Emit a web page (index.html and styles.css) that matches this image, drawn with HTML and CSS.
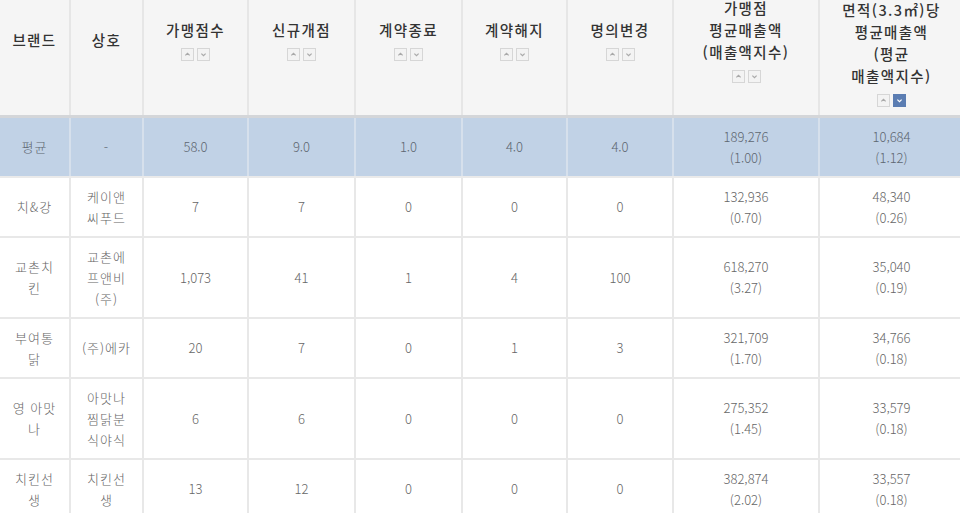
FILE: index.html
```html
<!DOCTYPE html>
<html lang="ko">
<head>
<meta charset="utf-8">
<link rel="stylesheet" href="styles.css">
</head>
<body>
<div class="wrap">
<table class="stats">
  <colgroup>
    <col class="c1"><col class="c2"><col class="c3"><col class="c4"><col class="c5"><col class="c6"><col class="c7"><col class="c8"><col class="c9">
  </colgroup>
  <thead>
    <tr class="head">
      <th>브랜드</th>
      <th>상호</th>
      <th>가맹점수<div class="sort"><span class="btn"><svg viewBox="0 0 13 13"><polyline points="4,7.5 6.5,5 9,7.5"/></svg></span><span class="btn"><svg viewBox="0 0 13 13"><polyline points="4,5.5 6.5,8 9,5.5"/></svg></span></div></th>
      <th>신규개점<div class="sort"><span class="btn"><svg viewBox="0 0 13 13"><polyline points="4,7.5 6.5,5 9,7.5"/></svg></span><span class="btn"><svg viewBox="0 0 13 13"><polyline points="4,5.5 6.5,8 9,5.5"/></svg></span></div></th>
      <th>계약종료<div class="sort"><span class="btn"><svg viewBox="0 0 13 13"><polyline points="4,7.5 6.5,5 9,7.5"/></svg></span><span class="btn"><svg viewBox="0 0 13 13"><polyline points="4,5.5 6.5,8 9,5.5"/></svg></span></div></th>
      <th>계약해지<div class="sort"><span class="btn"><svg viewBox="0 0 13 13"><polyline points="4,7.5 6.5,5 9,7.5"/></svg></span><span class="btn"><svg viewBox="0 0 13 13"><polyline points="4,5.5 6.5,8 9,5.5"/></svg></span></div></th>
      <th>명의변경<div class="sort"><span class="btn"><svg viewBox="0 0 13 13"><polyline points="4,7.5 6.5,5 9,7.5"/></svg></span><span class="btn"><svg viewBox="0 0 13 13"><polyline points="4,5.5 6.5,8 9,5.5"/></svg></span></div></th>
      <th>가맹점<br>평균매출액<br>(매출액지수)<div class="sort"><span class="btn"><svg viewBox="0 0 13 13"><polyline points="4,7.5 6.5,5 9,7.5"/></svg></span><span class="btn"><svg viewBox="0 0 13 13"><polyline points="4,5.5 6.5,8 9,5.5"/></svg></span></div></th>
      <th class="th-low">면적(3.3㎡)당<br>평균매출액<br>(평균<br>매출액지수)<div class="sort"><span class="btn"><svg viewBox="0 0 13 13"><polyline points="4,7.5 6.5,5 9,7.5"/></svg></span><span class="btn on"><svg viewBox="0 0 13 13"><polyline points="4,5.5 6.5,8 9,5.5"/></svg></span></div></th>
    </tr>
  </thead>
  <tbody>
    <tr class="avg">
      <td>평균</td><td>-</td><td>58.0</td><td>9.0</td><td>1.0</td><td>4.0</td><td>4.0</td><td>189,276<br>(1.00)</td><td>10,684<br>(1.12)</td>
    </tr>
    <tr>
      <td>치&amp;강</td><td>케이앤<br>씨푸드</td><td>7</td><td>7</td><td>0</td><td>0</td><td>0</td><td>132,936<br>(0.70)</td><td>48,340<br>(0.26)</td>
    </tr>
    <tr>
      <td>교촌치<br>킨</td><td>교촌에<br>프앤비<br>(주)</td><td>1,073</td><td>41</td><td>1</td><td>4</td><td>100</td><td>618,270<br>(3.27)</td><td>35,040<br>(0.19)</td>
    </tr>
    <tr>
      <td>부여통<br>닭</td><td>(주)에카</td><td>20</td><td>7</td><td>0</td><td>1</td><td>3</td><td>321,709<br>(1.70)</td><td>34,766<br>(0.18)</td>
    </tr>
    <tr>
      <td>영 아맛<br>나</td><td>아맛나<br>찜닭분<br>식야식</td><td>6</td><td>6</td><td>0</td><td>0</td><td>0</td><td>275,352<br>(1.45)</td><td>33,579<br>(0.18)</td>
    </tr>
    <tr>
      <td>치킨선<br>생</td><td>치킨선<br>생</td><td>13</td><td>12</td><td>0</td><td>0</td><td>0</td><td>382,874<br>(2.02)</td><td>33,557<br>(0.18)</td>
    </tr>
  </tbody>
</table>
</div>
</body>
</html>
```

FILE: styles.css
```css
html, body {
  margin: 0;
  padding: 0;
  background: #ffffff;
  overflow: hidden;
}

.wrap {
  width: 960px;
  height: 513px;
  overflow: hidden;
}

.stats {
  border-collapse: collapse;
  table-layout: fixed;
  width: 964px;
  margin-top: -35px;
  font-family: "Noto Sans CJK KR", "Noto Sans", sans-serif;
  font-size: 13px;
  font-weight: 300;
  color: #666666;
  text-align: center;
}

.c1 { width: 70px; }
.c2 { width: 73px; }
.c3 { width: 105px; }
.c4 { width: 107px; }
.c5 { width: 107px; }
.c6 { width: 105px; }
.c7 { width: 106px; }
.c8 { width: 146px; }
.c9 { width: 145px; }

.head {
  height: 151px;
}

.stats th {
  padding: 0 2px;
  background: #f5f5f5;
  color: #333333;
  font-size: 14.5px;
  font-weight: 500;
  letter-spacing: 1.4px;
  line-height: 22px;
  vertical-align: middle;
  border-left: 2px solid #e6e6e6;
  border-right: 2px solid #e6e6e6;
  border-bottom: 3px solid #d4d6d9;
}

.stats th:first-child,
.stats td:first-child {
  border-left: none;
}

.stats .th-low {
  padding-top: 26px;
}

.sort {
  display: flex;
  justify-content: center;
  gap: 3px;
  margin-top: 7px;
  height: 13px;
}

.btn {
  display: block;
  width: 13px;
  height: 13px;
  box-sizing: border-box;
  border: 1px solid #d6d6d6;
  background: #f3f3f3;
}

.btn svg {
  display: block;
  width: 11px;
  height: 11px;
  fill: none;
  stroke: #a9a9a9;
  stroke-width: 1.4;
}

.btn.on {
  background: #5b7db2;
  border-color: #5b7db2;
}

.btn.on svg {
  stroke: #ffffff;
}

.stats td {
  padding: 8px 4px;
  line-height: 21px;
  vertical-align: middle;
  border: 2px solid #e8e8e8;
  border-top: none;
}

.stats td:nth-child(-n+2) {
  letter-spacing: 1px;
}

.stats .avg td {
  background: #c1d2e6;
  color: #5d6670;
  border-left-color: #d6e0ec;
  border-right-color: #d6e0ec;
  border-bottom-color: #eaeaea;
}
```
